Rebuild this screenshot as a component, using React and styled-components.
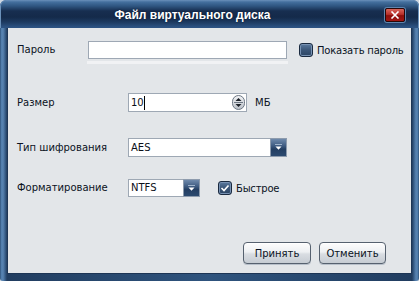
import React from "react";
import styled, { createGlobalStyle } from "styled-components";

const GlobalStyle = createGlobalStyle`
	html, body {
		margin: 0;
		padding: 0;
		background: #cfd8e2;
	}
	* {
		box-sizing: border-box;
	}
`;

const font = `"Liberation Sans", Arial, sans-serif`;
const textFont = `"DejaVu Sans", Verdana, sans-serif`;

export default function App() {
	return (
		<>
			<GlobalStyle />
			<Window>
				<TitleBar>
					<Title>Файл виртуального диска</Title>
					<CloseButton>
						<svg width="10" height="8" viewBox="0 0 10 8">
							<path d="M1.5 0.5 L8.5 7.5 M8.5 0.5 L1.5 7.5" stroke="#fff" strokeWidth="1.6" />
						</svg>
					</CloseButton>
				</TitleBar>
				<Body>
					<Row $top={13}>
						<Label $width={71}>Пароль</Label>
						<PasswordColumn>
							<Field $width={199} $height={18} />
							<StrengthBar />
						</PasswordColumn>
						<Check $gap={11}>
							<CheckBox />
							<CheckText>Показать пароль</CheckText>
						</Check>
					</Row>

					<Row $top={29}>
						<Label $width={111} $height={19}>Размер</Label>
						<Field $width={119} $height={19}>
							<FieldText>10</FieldText>
							<Caret />
							<Spinner>
								<svg width="13" height="15" viewBox="0 0 13 15">
									<defs>
										<linearGradient id="spin" x1="0" y1="0" x2="0" y2="1">
											<stop offset="0" stopColor="#f4f5f7" />
											<stop offset="1" stopColor="#b9bfc7" />
										</linearGradient>
									</defs>
									<rect x="0.5" y="0.5" width="12" height="14" rx="6" fill="url(#spin)" stroke="#6d7784" />
									<line x1="2" y1="7.5" x2="11" y2="7.5" stroke="#6d7784" />
									<path d="M3.5 6 L6.5 3 L9.5 6 Z" fill="#1a1f27" />
									<path d="M3.5 9 L6.5 12 L9.5 9 Z" fill="#1a1f27" />
								</svg>
							</Spinner>
						</Field>
						<Unit>МБ</Unit>
					</Row>

					<Row $top={26}>
						<Label $width={111} $height={19}>Тип шифрования</Label>
						<Combo $width={159} $height={19}>
							<FieldText>AES</FieldText>
							<DropButton>
								<DropArrow />
							</DropButton>
						</Combo>
					</Row>

					<Row $top={22}>
						<Label $width={111} $height={18}>Форматирование</Label>
						<Combo $width={72} $height={18}>
							<FieldText>NTFS</FieldText>
							<DropButton>
								<DropArrow />
							</DropButton>
						</Combo>
						<Check $gap={18}>
							<CheckBox>
								<svg width="10" height="8" viewBox="0 0 10 8">
									<path d="M1.5 4 L4 6.5 L8.5 1.5" stroke="#fff" strokeWidth="1.6" fill="none" />
								</svg>
							</CheckBox>
							<CheckText>Быстрое</CheckText>
						</Check>
					</Row>

					<Spacer />

					<Buttons>
						<Button $width={68}>Принять</Button>
						<Button $width={67}>Отменить</Button>
					</Buttons>
				</Body>
			</Window>
		</>
	);
}

const DropArrow = () => (
	<svg width="9" height="7" viewBox="0 0 9 7">
		<line x1="1" y1="0.5" x2="8" y2="0.5" stroke="#9fb4cc" />
		<path d="M1.5 2.5 L7.5 2.5 L4.5 5.8 Z" fill="#ffffff" />
	</svg>
);

// Styled Components

const Window = styled.div`
	width: 419px;
	height: 281px;
	display: flex;
	flex-direction: column;
	border-radius: 6px 6px 3px 3px;
	overflow: hidden;
	background: linear-gradient(to right, #27476c 0, #4f7cab 1px, #5883b1 3px, #3a608b 5px, #213d60 7px, #2f547e 50%, #213d60 calc(100% - 7px), #3a608b calc(100% - 5px), #5883b1 calc(100% - 3px), #4f7cab calc(100% - 1px), #27476c 100%);
	padding: 0 7px 7px;
	font-family: ${textFont};
`;

const TitleBar = styled.div`
	height: 28px;
	margin: 0 -7px;
	display: flex;
	align-items: flex-start;
	background: linear-gradient(to bottom, #6b91ba 0, #44709e 2px, #2f5681 6px, #172e50 11px, #142a4a 17px, #1d3a60 22px, #2c5282 27px, #2c5282 28px);
	border-radius: 6px 6px 0 0;
	box-shadow: inset 1px 0 0 #6b91ba, inset -1px 0 0 #6b91ba;
`;

const Title = styled.div`
	flex: 1;
	text-align: center;
	color: #ffffff;
	font-family: ${font};
	font-size: 12px;
	font-weight: bold;
	line-height: 14px;
	padding-top: 8px;
	text-shadow: 0 0 2px #0a1a30;
`;

const CloseButton = styled.div`
	width: 20px;
	height: 14px;
	margin: 8px 14px 0 0;
	display: flex;
	align-items: center;
	justify-content: center;
	border: 1px solid #2a0606;
	border-radius: 2px;
	background: linear-gradient(to bottom, #d8665c 0, #b8302a 45%, #8c0f0c 55%, #a11612 100%);
	box-shadow: 0 0 0 1px #5f86b0;
`;

const Body = styled.div`
	flex: 1;
	display: flex;
	flex-direction: column;
	background: #e3e6e9;
	border: 1px solid #1d3555;
	border-top: none;
	padding: 0 4px 9px 9px;
`;

const Row = styled.div`
	display: flex;
	align-items: flex-start;
	margin-top: ${(p) => p.$top}px;

	& > * {
		flex-shrink: 0;
	}
`;

const Label = styled.div`
	width: ${(p) => p.$width}px;
	height: ${(p) => p.$height || 18}px;
	line-height: ${(p) => p.$height || 18}px;
	font-size: 10px;
	color: #0a1222;
	white-space: nowrap;
`;

const PasswordColumn = styled.div`
	display: flex;
	flex-direction: column;
`;

const Field = styled.div`
	position: relative;
	width: ${(p) => p.$width}px;
	height: ${(p) => p.$height}px;
	display: flex;
	align-items: center;
	background: #ffffff;
	border: 1px solid #9ea8b4;
	padding-left: 2px;
`;

const Combo = styled(Field)`
	padding-right: 0;
`;

const StrengthBar = styled.div`
	width: 201px;
	height: 3px;
	margin: 2px 0 0 -1px;
	background: #f1f2f4;
`;

const FieldText = styled.span`
	flex: 1;
	font-size: 10px;
	color: #0b0f18;
	line-height: 14px;
`;

const Caret = styled.span`
	position: absolute;
	left: 15px;
	top: 2px;
	width: 1px;
	height: 14px;
	background: #000000;
`;

const Spinner = styled.div`
	display: flex;
	margin-right: 1px;
`;

const Unit = styled.div`
	margin-left: 8px;
	height: 19px;
	line-height: 19px;
	font-size: 10px;
	color: #0a1222;
`;

const DropButton = styled.div`
	width: 17px;
	align-self: stretch;
	margin: -1px -1px -1px 0;
	display: flex;
	align-items: center;
	justify-content: center;
	border: 1px solid #8d9bad;
	background: linear-gradient(to bottom, #6f8aac 0, #3f5c82 40%, #233e62 60%, #2c4a70 100%);
`;

const Check = styled.div`
	display: flex;
	align-items: center;
	height: 18px;
	margin-left: ${(p) => p.$gap}px;
`;

const CheckBox = styled.div`
	width: 14px;
	height: 14px;
	display: flex;
	align-items: center;
	justify-content: center;
	border: 1px solid #1a2a40;
	border-radius: 3px;
	background: linear-gradient(to bottom, #5b7a9f 0, #3b5678 50%, #2c4564 100%);
	box-shadow: inset 0 0 0 1px #7892b3;
`;

const CheckText = styled.span`
	margin-left: 4px;
	font-size: 10px;
	letter-spacing: -0.2px;
	color: #0a1222;
	white-space: nowrap;
`;

const Spacer = styled.div`
	flex: 1;
`;

const Buttons = styled.div`
	display: flex;
	justify-content: flex-end;
	gap: 8px;
	padding-right: 21px;
`;

const Button = styled.div`
	width: ${(p) => p.$width}px;
	height: 22px;
	display: flex;
	align-items: center;
	justify-content: center;
	font-size: 10px;
	color: #0a1222;
	border: 1px solid #56616f;
	border-radius: 4px;
	background: linear-gradient(to bottom, #fdfdfd 0, #eef0f3 45%, #d9dde2 55%, #c6ccd3 100%);
	box-shadow: inset 0 1px 0 #ffffff, 0 1px 0 #b8c0ca;
`;
